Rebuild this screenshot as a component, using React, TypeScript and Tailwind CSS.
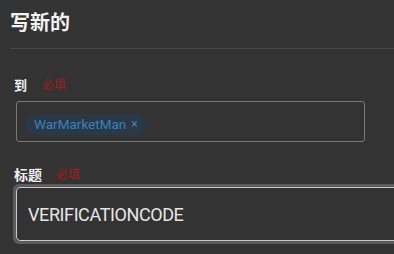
const cjk = '"Open Sans", "Noto Sans CJK SC", sans-serif';
const latin = 'Roboto, "Noto Sans CJK SC", sans-serif';

const Required = () => (
  <span className="text-[12px] leading-[14px] text-[#a31c1c]">必填</span>
);

export default function App() {
  return (
    <div
      className="w-[394px] h-[254px] overflow-hidden bg-[#333333] text-white"
      style={{ fontFamily: cjk }}
    >
      {/* Header */}
      <div className="ml-[10px] h-[49px] border-b border-[#484848] pt-[10px]">
        <h1 className="text-[20px] leading-[26px] font-bold text-[#f2f2f2]">写新的</h1>
      </div>

      {/* To */}
      <div className="pl-[14px] pt-[28px]">
        <div className="flex items-center gap-[15px] h-[16px]">
          <span className="text-[13px] leading-[16px] font-bold text-[#f0f0f0]">到</span>
          <Required />
        </div>
      </div>
      <div className="ml-[16px] mt-[8px] w-[349px] h-[41px] rounded-[3px] border border-[#777777] px-[8px] pt-[9px]">
        <span
          className="inline-flex items-center h-[21px] rounded-full bg-[#2a3947] pl-[9px] pr-[8px] text-[13.5px] leading-[21px] text-[#3a7fbf]"
          style={{ fontFamily: latin }}
        >
          WarMarketMan
          <span className="ml-[5px] text-[12px] text-[#4d7ea8]">×</span>
        </span>
      </div>

      {/* Subject */}
      <div className="pl-[14px] pt-[26px]">
        <div className="flex items-center gap-[14px] h-[14px]">
          <span className="text-[14px] leading-[16px] font-bold text-[#f0f0f0]">标题</span>
          <Required />
        </div>
      </div>
      <div className="ml-[13px] mt-[2px] w-[400px] h-[60px] rounded-[6px] border-[3px] border-[#5c5c5c]">
        <div className="h-full rounded-[4px] border border-[#c8c8c8] flex items-center pl-[11px]">
          <span
            className="text-[18px] leading-[22px] tracking-[-0.4px] text-[#e6e6e6] pt-[1px]"
            style={{ fontFamily: latin }}
          >
            VERIFICATIONCODE
          </span>
        </div>
      </div>
    </div>
  );
}
